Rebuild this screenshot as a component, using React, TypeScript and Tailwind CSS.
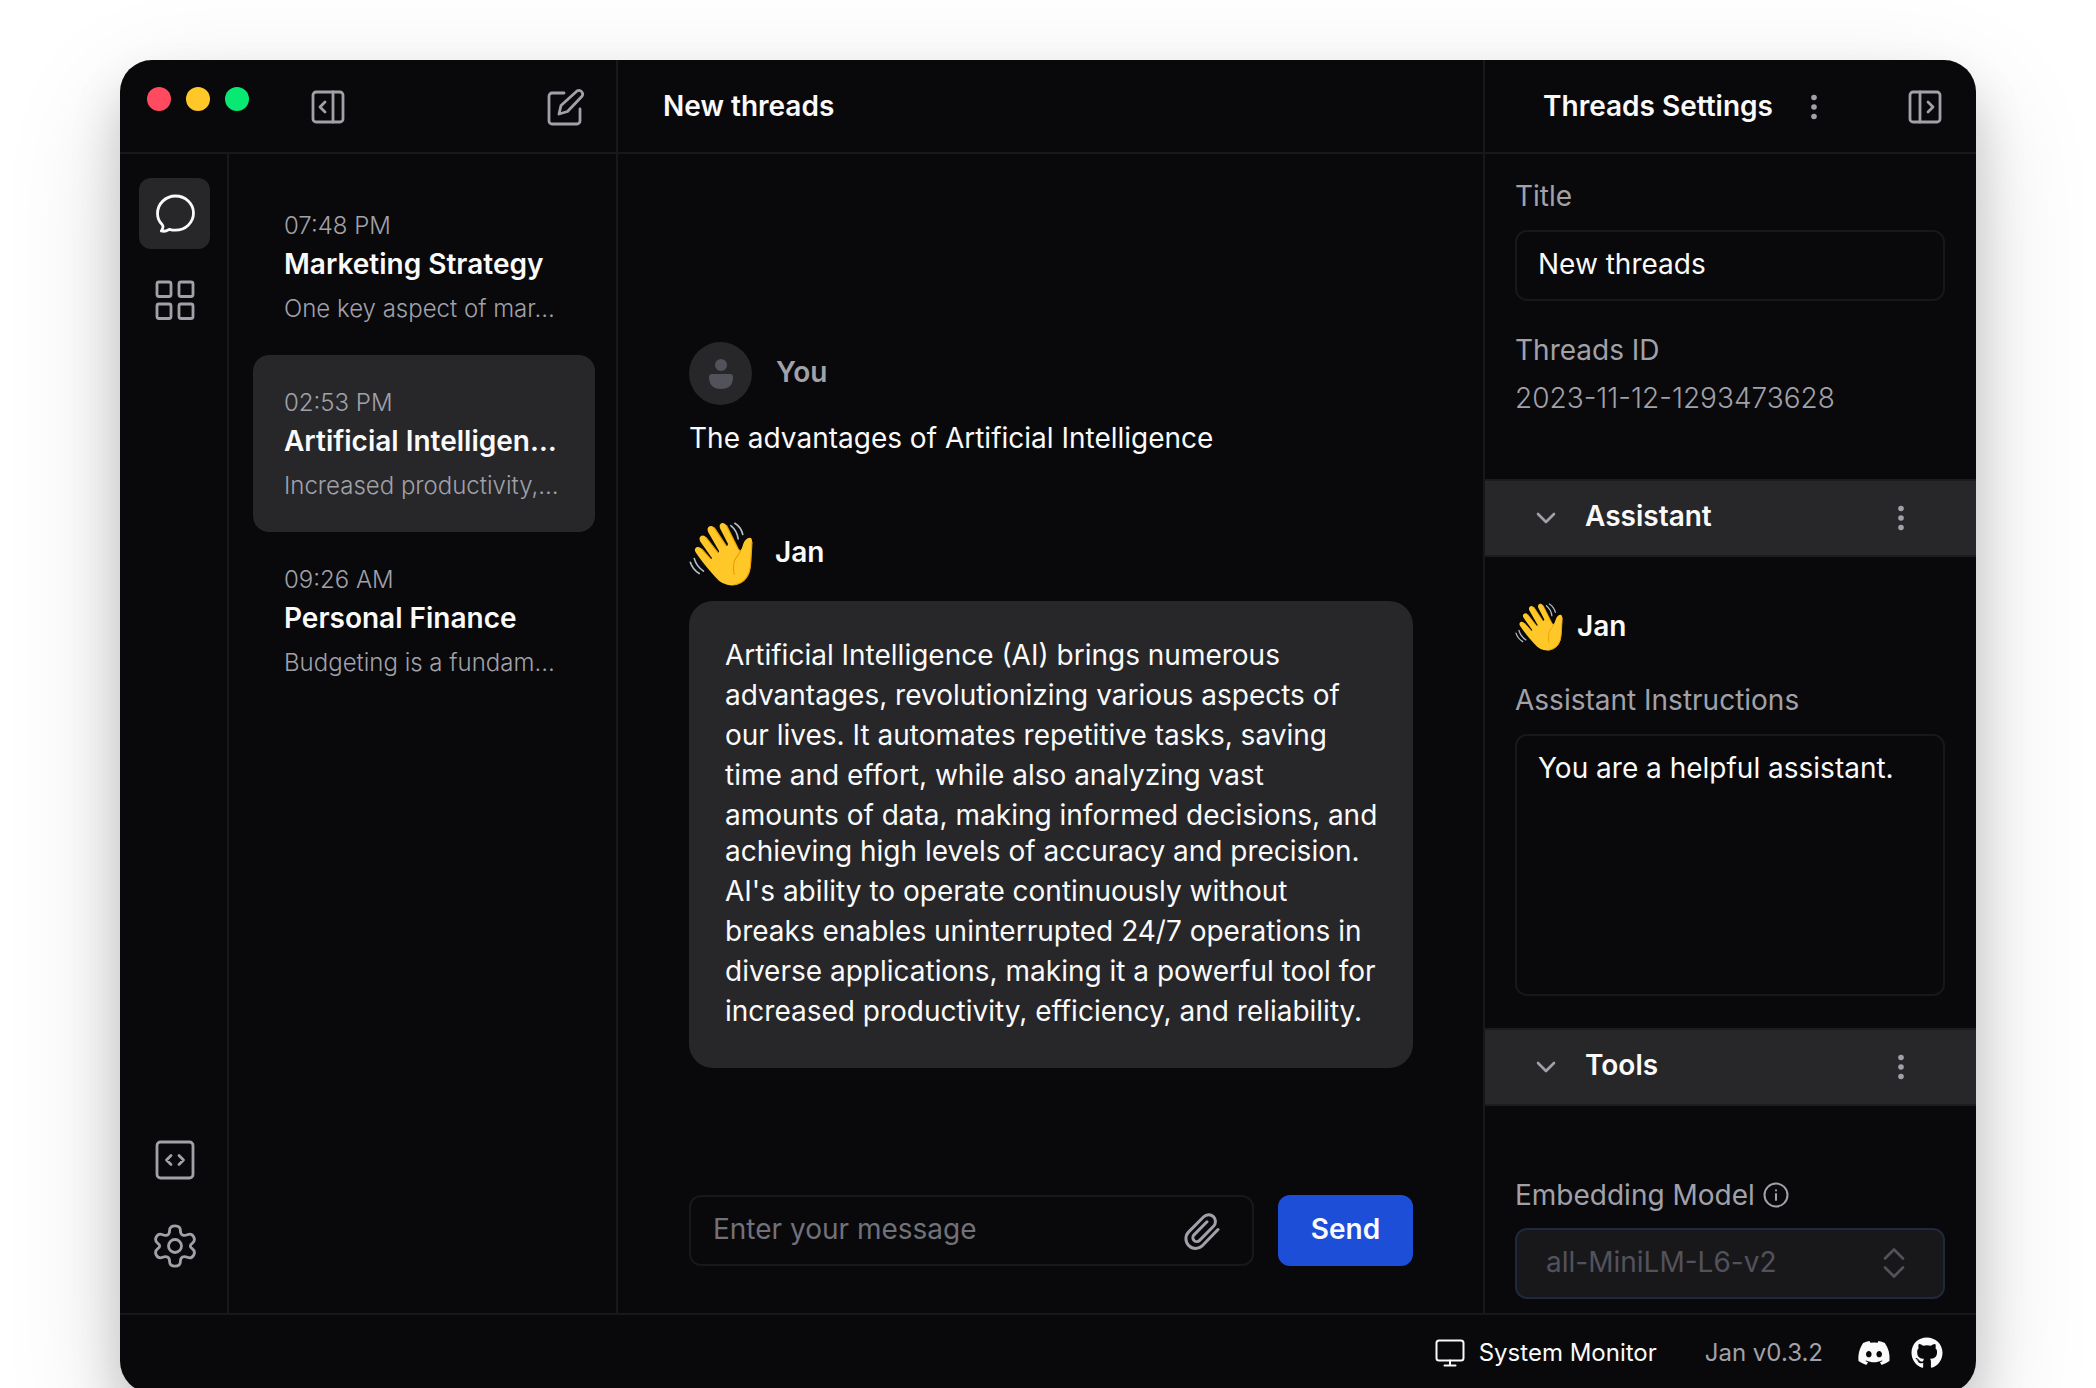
import React from "react";
import { FaDiscord, FaGithub } from "react-icons/fa";

type IconProps = { className?: string };

const stroke = {
  fill: "none",
  stroke: "currentColor",
  strokeLinecap: "round" as const,
  strokeLinejoin: "round" as const,
  "aria-hidden": true,
};

function PanelIcon({ className }: IconProps) {
  return (
    <svg viewBox="0 0 34 34" strokeWidth="2.8" {...stroke} className={className}>
      <rect x="2" y="2" width="30" height="30" rx="3" />
      <path d="M22 2v30M14 12l-5 5 5 5" />
    </svg>
  );
}

function EditIcon({ className }: IconProps) {
  return (
    <svg viewBox="0 0 38 38" strokeWidth="2.8" {...stroke} className={className}>
      <path d="M17 5H5a3 3 0 0 0-3 3v25a3 3 0 0 0 3 3h25a3 3 0 0 0 3-3V21" />
      <path d="M30 3a3.700 3.700 0 0 1 5 5.200L20.500 23.500 12 26l2-8.500z" />
    </svg>
  );
}

function ChatIcon({ className }: IconProps) {
  return (
    <svg viewBox="0 0 40 40" strokeWidth="2.8" {...stroke} className={className}>
      <path d="M20.500 2A18 17.500 0 0 0 2.500 19.500c0 4.500 1.500 8 4.600 11 1.500 1.600 1.200 3.500-.8 6.500 3.300.8 5.900-.3 8-1.700 2 .6 4 .9 6.200.9a18 17.100 0 0 0 0-34.200z" />
    </svg>
  );
}

function GridIcon({ className }: IconProps) {
  return (
    <svg viewBox="0 0 40 40" strokeWidth="2.8" {...stroke} className={className}>
      <rect x="2" y="2" width="14" height="14.500" rx="2" />
      <rect x="24" y="2" width="14" height="14.500" rx="2" />
      <rect x="2" y="24" width="14" height="14.500" rx="2" />
      <rect x="24" y="24" width="14" height="14.500" rx="2" />
    </svg>
  );
}

function CodeIcon({ className }: IconProps) {
  return (
    <svg viewBox="0 0 40 40" strokeWidth="2.800" {...stroke} className={className}>
      <rect x="2" y="2" width="36" height="36" rx="3.500" />
      <path d="M16 15.500 11.500 20l4.500 4.500M24 15.500l4.500 4.500-4.500 4.500" />
    </svg>
  );
}

function GearIcon({ className }: IconProps) {
  return (
    <svg viewBox="0 0 44 44" strokeWidth="2.800" {...stroke} className={className}>
      <circle cx="22" cy="22" r="6.500" />
      <path d="M16.600 6.500C16.600 3 19 1.800 22 1.800s5.400 1.200 5.400 4.700c0 4.600 3.300 5.800 6.900 4.200 3-1.300 5-.3 6.300 2 1.400 2.500 1.100 4.700-1.400 6.600-2.500 1.800-2.500 3.600 0 5.400 2.500 1.900 2.800 4.100 1.400 6.600-1.300 2.300-3.300 3.300-6.300 2-3.600-1.600-6.900-.4-6.900 4.200 0 3.500-2.400 4.700-5.400 4.700s-5.400-1.200-5.400-4.700c0-4.600-3.300-5.800-6.900-4.200-3 1.300-5 .3-6.300-2-1.400-2.500-1.100-4.700 1.400-6.600 2.500-1.800 2.500-3.600 0-5.400-2.500-1.900-2.800-4.100-1.400-6.600 1.300-2.300 3.300-3.300 6.300-2 3.600 1.600 6.900.4 6.900-4.200z" />
    </svg>
  );
}

function ClipIcon({ className }: IconProps) {
  return (
    <svg viewBox="0 0 36 38" strokeWidth="3" {...stroke} className={className}>
      <path d="M34 17.500 18.500 33.500a9.600 9.600 0 0 1-13.800-13.600L19.700 4.700a6.800 6.800 0 0 1 9.800 9.600L15.600 28.400a3.900 3.900 0 0 1-5.600-5.500L23 9.800" />
    </svg>
  );
}

function DotsIcon({ className }: IconProps) {
  return (
    <svg viewBox="0 0 6 26" fill="currentColor" aria-hidden className={className}>
      <circle cx="3" cy="3.500" r="2.800" />
      <circle cx="3" cy="13" r="2.800" />
      <circle cx="3" cy="22.500" r="2.800" />
    </svg>
  );
}

function ChevronIcon({ className }: IconProps) {
  return (
    <svg viewBox="0 0 20 12" strokeWidth="2.600" {...stroke} className={className}>
      <path d="m2 2 8 8 8-8" />
    </svg>
  );
}

function UpDownIcon({ className }: IconProps) {
  return (
    <svg viewBox="0 0 22 30" strokeWidth="2.600" {...stroke} className={className}>
      <path d="m2 10.500 9-9 9 9M2 19.500l9 9 9-9" />
    </svg>
  );
}

function InfoIcon({ className }: IconProps) {
  return (
    <svg viewBox="0 0 26 26" strokeWidth="2" {...stroke} className={className}>
      <circle cx="13" cy="13" r="11.500" />
      <path d="M13 12v6M13 8.300v.2" />
    </svg>
  );
}

function MonitorIcon({ className }: IconProps) {
  return (
    <svg viewBox="0 0 30 28" strokeWidth="2" {...stroke} className={className}>
      <rect x="1.500" y="1.500" width="27" height="20" rx="2.500" />
      <path d="M15 21.500V26.500M9.500 26.500h11" />
    </svg>
  );
}

function WaveHand({ className }: IconProps) {
  return (
    <svg viewBox="26 37 194 194" fill="none" strokeLinecap="round" role="img" aria-label="Waving hand" className={className}>
      <path
        fill="#ffc828"
        d="M46 129Q40 118 50 113 58 111 65 119L90 147Q97 152 95 145L60 96Q54 84 64 79 72 76 78 84L113 129Q118 131 117 125L84 67Q79 55 88 50 97 46 103 55L138 108Q145 112 144 103L120 56Q116 44 126 40 135 38 140 48L175 118Q181 126 183 122 188 114 189 108 193 92 204 86 218 80 217 98L214 160Q212 222 160 229 128 231 105 203 70 165 46 129Z"
      />
      <path
        stroke="#e99f00"
        strokeWidth="3.500"
        d="M65 119 90 147M78 84l35 45M103 55l35 53M140 48l35 70Q181 126 182 123 181 130 172 141 156 157 163 196M217 98l-4 62Q211 220 162 228"
      />
      <path
        stroke="#b0bec5"
        strokeWidth="5"
        d="M165 41q19 12 24 34M153 48q19 16 22 40M30 159q7 22 27 34M42 148q7 24 28 38"
      />
    </svg>
  );
}

const threads = [
  { time: "07:48 PM", title: "Marketing Strategy", text: "One key aspect of mar…", active: false },
  { time: "02:53 PM", title: "Artificial Intelligen…", text: "Increased productivity,…", active: true },
  { time: "09:26 AM", title: "Personal Finance", text: "Budgeting is a fundam…", active: false },
];

function ThreadItem({ time, title, text, active }: (typeof threads)[number]) {
  return (
    <button
      type="button"
      className={`flex h-[177px] w-full flex-col rounded-2xl px-[31px] pt-8 text-left whitespace-nowrap ${active ? "bg-[#27272a]" : ""}`}
    >
      <span className="text-2xl leading-8 font-light text-[#a1a1aa]">{time}</span>
      <span className="text-[28px] leading-11 font-semibold">{title}</span>
      <span className="text-2xl leading-[46px] font-light text-[#a1a1aa]">{text}</span>
    </button>
  );
}

function RailButton({ label, active, children }: { label: string; active?: boolean; children: React.ReactNode }) {
  return (
    <button
      type="button"
      aria-label={label}
      className={`flex size-[71px] items-center justify-center rounded-xl ${active ? "bg-[#27272a]" : "text-[#a1a1aa]"}`}
    >
      {children}
    </button>
  );
}

function Band({ title }: { title: string }) {
  return (
    <div className="flex h-[78px] shrink-0 items-center border-y-2 border-[#1c1c1f] bg-[#27272a] pr-18 pl-[51px]">
      <button type="button" className="flex items-center gap-[29px] text-[28px] leading-10 font-semibold">
        <ChevronIcon className="w-5 text-[#a1a1aa]" />
        <span className="pb-1">{title}</span>
      </button>
      <button type="button" aria-label={`${title} options`} className="ml-auto text-[#a1a1aa]">
        <DotsIcon className="w-1.5" />
      </button>
    </div>
  );
}

export default function App() {
  return (
    <div className="h-screen overflow-hidden bg-white px-[120px] pt-[60px] font-['Inter',sans-serif] text-[#fafafa]">
      <div className="flex h-[calc(100vh-55px)] flex-col overflow-hidden rounded-[32px] bg-[#09090b] shadow-[0_40px_120px_rgba(0,0,0,0.14),0_30px_50px_rgba(0,0,0,0.18)]">
        <header className="flex h-[94px] shrink-0 border-b-2 border-[#18181b]">
          <div className="flex w-[498px] items-center border-r-2 border-[#18181b] pr-[31px] pl-[27px]">
            <div className="mb-3.5 flex gap-[15px]">
              <span className="size-6 rounded-full bg-[#ff4a5f]" />
              <span className="size-6 rounded-full bg-[#ffc728]" />
              <span className="size-6 rounded-full bg-[#08e974]" />
            </div>
            <button type="button" aria-label="Collapse threads" className="ml-[62px] pt-0.5 text-[#a1a1aa]">
              <PanelIcon className="size-[34px]" />
            </button>
            <button type="button" aria-label="New thread" className="ml-auto pt-0.5 text-[#a1a1aa]">
              <EditIcon className="size-[38px]" />
            </button>
          </div>
          <h1 className="flex flex-1 items-center pl-[45px] text-[28px] leading-10 font-semibold">New threads</h1>
          <div className="flex w-[493px] items-center border-l-2 border-[#18181b] pr-[34px] pl-[58px]">
            <h2 className="text-[28px] leading-10 font-semibold">Threads Settings</h2>
            <button type="button" aria-label="Thread options" className="ml-[38px] pt-0.5 text-[#a1a1aa]">
              <DotsIcon className="w-1.5" />
            </button>
            <button type="button" aria-label="Collapse settings" className="ml-auto pt-0.5 text-[#a1a1aa]">
              <PanelIcon className="size-[34px] rotate-180" />
            </button>
          </div>
        </header>

        <div className="flex min-h-0 flex-1">
          <nav className="flex w-[109px] shrink-0 flex-col gap-[15px] border-r-2 border-[#18181b] pt-6 pb-8 pl-[19px]">
            <RailButton label="Threads" active>
              <ChatIcon className="size-10" />
            </RailButton>
            <RailButton label="Hub">
              <GridIcon className="size-10" />
            </RailButton>
            <div className="flex-1" />
            <RailButton label="Local API server">
              <CodeIcon className="size-10" />
            </RailButton>
            <RailButton label="Settings">
              <GearIcon className="size-11" />
            </RailButton>
          </nav>

          <aside className="w-[389px] shrink-0 border-r-2 border-[#18181b] pt-6 pr-[21px] pl-6">
            {threads.map((t) => (
              <ThreadItem key={t.time} {...t} />
            ))}
          </aside>

          <main className="flex min-w-0 flex-1 flex-col pr-[70px] pl-[71px] pb-[47px] text-[28px] leading-10">
            <div className="mt-[188px] flex items-center gap-6">
              <div className="flex size-[63px] items-center justify-center rounded-full bg-[#27272a]">
                <svg viewBox="0 0 24 30" fill="#52525b" aria-hidden className="w-6">
                  <circle cx="12" cy="6" r="6" />
                  <path d="M3 15h18q3 0 3 3 0 12-12 12T0 18q0-3 3-3z" />
                </svg>
              </div>
              <span className="pb-1 font-semibold text-[#a1a1aa]">You</span>
            </div>
            <p className="mt-[13px]">The advantages of Artificial Intelligence</p>
            <div className="mt-16 flex items-center gap-[22px]">
              <WaveHand className="size-[64px]" />
              <span className="pb-1 font-semibold">Jan</span>
            </div>
            <div className="mt-[15px] rounded-3xl bg-[#27272a] px-9 pt-[34px] pb-[37px] whitespace-nowrap">
              <p>
                Artificial Intelligence (AI) brings numerous
                <br />
                advantages, revolutionizing various aspects of
                <br />
                our lives. It automates repetitive tasks, saving
                <br />
                time and effort, while also analyzing vast
                <br />
                amounts of data, making informed decisions, and
              </p>
              <p className="-mt-1">
                achieving high levels of accuracy and precision.
                <br />
                AI's ability to operate continuously without
                <br />
                breaks enables uninterrupted 24/7 operations in
                <br />
                diverse applications, making it a powerful tool for
                <br />
                increased productivity, efficiency, and reliability.
              </p>
            </div>
            <form className="mt-auto flex gap-6" onSubmit={(e) => e.preventDefault()}>
              <div className="flex h-[71px] min-w-0 flex-1 items-center rounded-xl border-2 border-[#18181b] pr-8 pl-[22px]">
                <input
                  aria-label="Message"
                  placeholder="Enter your message"
                  className="min-w-0 flex-1 bg-transparent pb-1 outline-none placeholder:text-[#71717a]"
                />
                <button type="button" aria-label="Attach file" className="text-[#a1a1aa]">
                  <ClipIcon className="w-9" />
                </button>
              </div>
              <button type="submit" className="w-[135px] rounded-xl bg-[#1d4ed8] pb-1 font-semibold">
                Send
              </button>
            </form>
          </main>

          <section className="flex w-[493px] shrink-0 flex-col overflow-hidden border-l-2 border-[#18181b] text-[28px] leading-10">
            <div className="flex h-[325px] shrink-0 flex-col pr-[31px] pl-[30px] pt-[22px]">
              <label htmlFor="title" className="text-[#a1a1aa]">Title</label>
              <input
                id="title"
                defaultValue="New threads"
                className="mt-[14px] h-[71px] w-full rounded-xl border-2 border-[#18181b] bg-transparent px-[21px] pb-1 outline-none"
              />
              <span className="mt-[29px] text-[#a1a1aa]">Threads ID</span>
              <span className="mt-2 font-light text-[#a1a1aa]">2023-11-12-1293473628</span>
            </div>
            <Band title="Assistant" />
            <div className="flex h-[471px] shrink-0 flex-col pr-[31px] pl-[30px] pt-[46px]">
              <div className="flex items-center gap-[14px]">
                <WaveHand className="size-12" />
                <span className="pb-0.5 font-semibold">Jan</span>
              </div>
              <label htmlFor="instructions" className="mt-[29px] text-[#a1a1aa]">Assistant Instructions</label>
              <textarea
                id="instructions"
                defaultValue="You are a helpful assistant."
                className="mt-[14px] h-[262px] w-full resize-none rounded-xl border-2 border-[#18181b] bg-transparent px-[21px] py-3 outline-none"
              />
            </div>
            <Band title="Tools" />
            <div className="pr-[31px] pl-[30px] pt-[69px]">
              <label htmlFor="model" className="flex items-center gap-2 text-[#a1a1aa]">
                Embedding Model
                <InfoIcon className="size-[26px]" />
              </label>
              <div className="relative mt-[13px]">
                <select
                  id="model"
                  disabled
                  className="h-[71px] w-full appearance-none rounded-xl border-2 border-[#1e293b] bg-[#18181b] px-[29px] pb-1 text-[#52525b] opacity-100"
                >
                  <option>all-MiniLM-L6-v2</option>
                </select>
                <UpDownIcon className="pointer-events-none absolute top-5 right-10 w-[22px] text-[#52525b]" />
              </div>
            </div>
          </section>
        </div>

        <footer className="flex h-20 shrink-0 items-center justify-end border-t-2 border-[#18181b] pr-[33px] pb-[3px] text-2xl leading-8">
          <button type="button" className="flex items-center gap-[14px]">
            <MonitorIcon className="w-[30px]" />
            System Monitor
          </button>
          <span className="ml-12 text-[#a1a1aa]">Jan v0.3.2</span>
          <a href="#discord" aria-label="Discord" className="ml-[34px]">
            <FaDiscord className="size-[34px]" />
          </a>
          <a href="#github" aria-label="GitHub" className="ml-5">
            <FaGithub className="size-8" />
          </a>
        </footer>
      </div>
    </div>
  );
}
